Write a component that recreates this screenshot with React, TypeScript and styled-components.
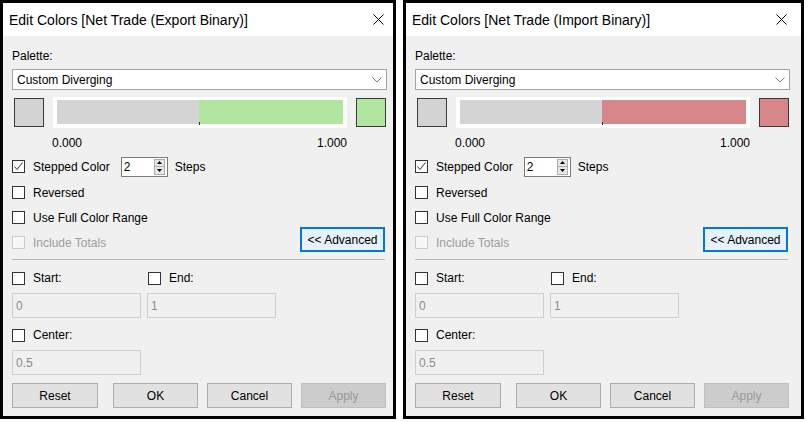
import React from 'react';
import styled, { createGlobalStyle } from 'styled-components';

const GlobalStyle = createGlobalStyle`
  html, body { margin: 0; padding: 0; background: #fff; }
  body { font-family: "Liberation Sans", Arial, sans-serif; font-size: 12px; color: #000; }
  * { box-sizing: border-box; }
`;

const Page = styled.div`
  display: flex;
  gap: 7px;
  align-items: flex-start;
`;

const Dialog = styled.div<{ $w: number }>`
  width: ${p => p.$w}px;
  height: 419px;
  border: 3px solid #000;
  background: #f0f0f0;
  display: flex;
  flex-direction: column;
`;

const TitleBar = styled.div`
  height: 33px;
  flex: none;
  background: #fff;
  display: grid;
  grid-template-columns: 364px 11px;
  align-items: center;
  padding-left: 6px;
`;

const Title = styled.span`
  font-size: 14px;
  white-space: nowrap;
`;

const Body = styled.div`
  width: 384px;
  padding-left: 9px;
  display: flex;
  flex-direction: column;
`;

const Label = styled.div<{ $mt: number }>`
  margin-top: ${p => p.$mt}px;
  height: 16px;
  line-height: 16px;
`;

const Select = styled.div`
  margin-top: 5px;
  height: 21px;
  width: 375px;
  background: #fff;
  border: 1px solid #a3a3a3;
  display: flex;
  align-items: center;
  justify-content: space-between;
  padding: 0 4px 0 4px;
`;

const ColorRow = styled.div`
  margin-top: 7px;
  height: 31px;
  display: flex;
  align-items: center;
`;

const Swatch = styled.div<{ $c: string; $ml: number }>`
  width: 30px;
  height: 29px;
  margin-left: ${p => p.$ml}px;
  background: ${p => p.$c};
  border: 1px solid #3a3a3a;
`;

const Frame = styled.div`
  margin-left: 9px;
  width: 294px;
  height: 31px;
  background: #fff;
  padding: 3px 4px 4px 4px;
`;

const Bar = styled.div`
  position: relative;
  width: 286px;
  height: 24px;
  display: flex;
`;

const BarPart = styled.div<{ $c: string; $w: number }>`
  width: ${p => p.$w}px;
  height: 100%;
  background: ${p => p.$c};
`;

const Tick = styled.div`
  position: absolute;
  left: 142px;
  bottom: -1px;
  width: 1px;
  height: 3px;
  background: #333;
`;

const ScaleRow = styled.div`
  margin-top: 7px;
  height: 16px;
  line-height: 16px;
  margin-left: 40px;
  width: 295px;
  display: flex;
  justify-content: space-between;
`;

const CheckRow = styled.div<{ $h: number; $mt?: number }>`
  height: ${p => p.$h}px;
  margin-top: ${p => p.$mt ?? 0}px;
  display: flex;
  align-items: center;
`;

const Box = styled.div<{ $disabled?: boolean }>`
  width: 13px;
  height: 13px;
  flex: none;
  background: ${p => (p.$disabled ? '#f7f7f7' : '#fff')};
  border: 1px solid ${p => (p.$disabled ? '#cccccc' : '#333')};
  display: flex;
  align-items: center;
  justify-content: center;
`;

const CheckText = styled.span<{ $disabled?: boolean }>`
  margin-left: 8px;
  color: ${p => (p.$disabled ? '#9d9d9d' : '#000')};
  white-space: nowrap;
`;

const Spin = styled.div`
  margin-left: 11px;
  width: 47px;
  height: 20px;
  background: #fff;
  border: 1px solid #7a7a7a;
  display: flex;
  align-items: center;
  justify-content: space-between;
  padding: 0 2px 0 2px;
`;

const SpinButtons = styled.div`
  width: 11px;
  height: 16px;
  display: flex;
  flex-direction: column;
  border: 1px solid #adadad;
  background: #e6e6e6;
`;

const SpinBtn = styled.div<{ $top?: boolean }>`
  flex: 1;
  display: flex;
  align-items: center;
  justify-content: center;
  border-bottom: ${p => (p.$top ? '1px solid #adadad' : 'none')};
`;

const StepsText = styled.span`
  margin-left: 7px;
`;

const OptionsBlock = styled.div`
  margin-top: 3px;
  width: 375px;
  display: flex;
  justify-content: space-between;
  align-items: flex-end;
`;

const OptionsCol = styled.div`
  display: flex;
  flex-direction: column;
`;

const Button = styled.div<{ $ml?: number; $w?: number; $variant?: 'default' | 'focus' | 'disabled' }>`
  width: ${p => p.$w ?? 85}px;
  height: 25px;
  margin-left: ${p => p.$ml ?? 0}px;
  display: flex;
  align-items: center;
  justify-content: center;
  background: ${p => (p.$variant === 'focus' ? '#e5f1fb' : p.$variant === 'disabled' ? '#cccccc' : '#e1e1e1')};
  border: ${p => (p.$variant === 'focus' ? '2px solid #0078d7' : p.$variant === 'disabled' ? '1px solid #bfbfbf' : '1px solid #adadad')};
  color: ${p => (p.$variant === 'disabled' ? '#9a9a9a' : '#000')};
`;

const AdvancedWrap = styled.div`
  margin-right: 2px;
  margin-bottom: 3px;
`;

const Separator = styled.div`
  margin-top: 4px;
  width: 373px;
  height: 1px;
  background: #b9b9b9;
`;

const RangeRow = styled.div<{ $mt: number }>`
  margin-top: ${p => p.$mt}px;
  height: 16px;
  display: flex;
  align-items: center;
`;

const RangeCell = styled.div<{ $w?: number }>`
  width: ${p => (p.$w ? `${p.$w}px` : 'auto')};
  display: flex;
  align-items: center;
`;

const InputRow = styled.div<{ $mt: number }>`
  margin-top: ${p => p.$mt}px;
  display: flex;
  gap: 6px;
`;

const Input = styled.div`
  width: 129px;
  height: 25px;
  border: 1px solid #cfcfcf;
  background: #f0f0f0;
  color: #8c8c8c;
  display: flex;
  align-items: center;
  padding-left: 3px;
`;

const ButtonRow = styled.div`
  margin-top: 8px;
  display: flex;
`;

const Chevron = () => (
  <svg width="10" height="6" viewBox="0 0 10 6">
    <polyline points="0.5,0.5 5,5 9.5,0.5" fill="none" stroke="#777" strokeWidth="1" />
  </svg>
);

const CloseIcon = () => (
  <svg width="11" height="11" viewBox="0 0 11 11">
    <path d="M0.5 0.5 L10.5 10.5 M10.5 0.5 L0.5 10.5" stroke="#000" strokeWidth="1" />
  </svg>
);

const CheckMark = () => (
  <svg width="11" height="11" viewBox="0 0 11 11">
    <polyline points="1.5,5.5 4,8.5 9.5,1.5" fill="none" stroke="#333" strokeWidth="1" />
  </svg>
);

const UpArrow = () => (
  <svg width="5" height="3" viewBox="0 0 5 3">
    <polygon points="2.5,0 5,3 0,3" fill="#000" />
  </svg>
);

const DownArrow = () => (
  <svg width="5" height="3" viewBox="0 0 5 3">
    <polygon points="0,0 5,0 2.5,3" fill="#000" />
  </svg>
);

type DialogProps = { title: string; color: string; width: number };

const Check = ({ label, checked, disabled }: { label: string; checked?: boolean; disabled?: boolean }) => (
  <>
    <Box $disabled={disabled}>{checked && <CheckMark />}</Box>
    <CheckText $disabled={disabled}>{label}</CheckText>
  </>
);

const EditColorsDialog = ({ title, color, width }: DialogProps) => (
  <Dialog $w={width}>
    <TitleBar>
      <Title>{title}</Title>
      <CloseIcon />
    </TitleBar>
    <Body>
      <Label $mt={12}>Palette:</Label>
      <Select>
        <span>Custom Diverging</span>
        <Chevron />
      </Select>
      <ColorRow>
        <Swatch $c="#d3d3d3" $ml={2} />
        <Frame>
          <Bar>
            <BarPart $c="#d4d4d4" $w={142} />
            <BarPart $c={color} $w={144} />
            <Tick />
          </Bar>
        </Frame>
        <Swatch $c={color} $ml={9} />
      </ColorRow>
      <ScaleRow>
        <span>0.000</span>
        <span>1.000</span>
      </ScaleRow>
      <CheckRow $h={21} $mt={5}>
        <Check label="Stepped Color" checked />
        <Spin>
          <span>2</span>
          <SpinButtons>
            <SpinBtn $top>
              <UpArrow />
            </SpinBtn>
            <SpinBtn>
              <DownArrow />
            </SpinBtn>
          </SpinButtons>
        </Spin>
        <StepsText>Steps</StepsText>
      </CheckRow>
      <OptionsBlock>
        <OptionsCol>
          <CheckRow $h={25}>
            <Check label="Reversed" />
          </CheckRow>
          <CheckRow $h={25}>
            <Check label="Use Full Color Range" />
          </CheckRow>
          <CheckRow $h={25}>
            <Check label="Include Totals" disabled />
          </CheckRow>
        </OptionsCol>
        <AdvancedWrap>
          <Button $variant="focus">&lt;&lt; Advanced</Button>
        </AdvancedWrap>
      </OptionsBlock>
      <Separator />
      <RangeRow $mt={10}>
        <RangeCell $w={136}>
          <Check label="Start:" />
        </RangeCell>
        <RangeCell>
          <Check label="End:" />
        </RangeCell>
      </RangeRow>
      <InputRow $mt={7}>
        <Input>0</Input>
        <Input>1</Input>
      </InputRow>
      <RangeRow $mt={9}>
        <RangeCell>
          <Check label="Center:" />
        </RangeCell>
      </RangeRow>
      <InputRow $mt={7}>
        <Input>0.5</Input>
      </InputRow>
      <ButtonRow>
        <Button $w={86}>Reset</Button>
        <Button $ml={15}>OK</Button>
        <Button $ml={9}>Cancel</Button>
        <Button $ml={9} $variant="disabled">Apply</Button>
      </ButtonRow>
    </Body>
  </Dialog>
);

export default function App() {
  return (
    <>
      <GlobalStyle />
      <Page>
        <EditColorsDialog title="Edit Colors [Net Trade (Export Binary)]" color="#b1e6a0" width={396} />
        <EditColorsDialog title="Edit Colors [Net Trade (Import Binary)]" color="#d7878a" width={401} />
      </Page>
    </>
  );
}
